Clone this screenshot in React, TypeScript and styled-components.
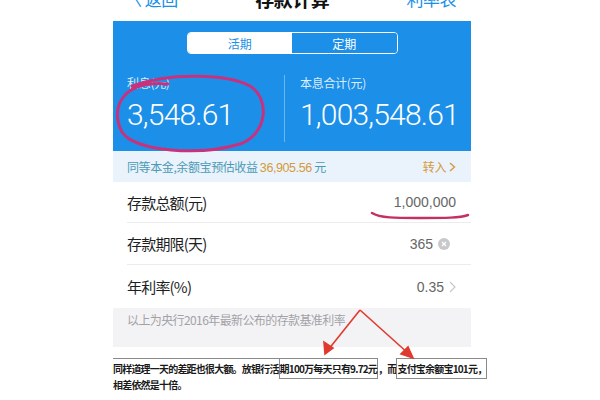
import styled, { createGlobalStyle } from "styled-components";

const GlobalStyle = createGlobalStyle`
  html, body {
    margin: 0;
    padding: 0;
    background: #ffffff;
  }
  body {
    font-family: "Noto Sans CJK SC", "Noto Sans", sans-serif;
  }
`;

const BLUE = "#1c8fe8";

const Page = styled.div`
  position: relative;
  width: 600px;
  height: 400px;
  overflow: hidden;
  background: #ffffff;
`;

const Column = styled.div`
  width: 358px;
  margin-left: 113px;
  display: flex;
  flex-direction: column;
`;

const NavBar = styled.div`
  height: 21px;
  display: flex;
  align-items: flex-start;
  justify-content: space-between;
  padding: 0 15px 0 12px;
  overflow: hidden;
`;

const NavItem = styled.span<{ $strong?: boolean }>`
  margin-top: -11px;
  font-size: ${(p) => (p.$strong ? "19px" : "17px")};
  line-height: 20px;
  font-weight: ${(p) => (p.$strong ? 600 : 400)};
  color: ${(p) => (p.$strong ? "#111" : BLUE)};
  letter-spacing: -0.5px;
`;

const BluePanel = styled.div`
  background: ${BLUE};
  height: 130px;
  display: flex;
  flex-direction: column;
  align-items: center;
  padding-top: 11px;
  box-sizing: border-box;
`;

const Segment = styled.div`
  width: 211px;
  height: 22px;
  display: flex;
  border: 1px solid #ffffff;
  border-radius: 4px;
  overflow: hidden;
  box-sizing: border-box;
`;

const SegmentTab = styled.div<{ $active?: boolean }>`
  flex: 1;
  display: flex;
  align-items: center;
  justify-content: center;
  font-size: 12px;
  background: ${(p) => (p.$active ? "#ffffff" : BLUE)};
  color: ${(p) => (p.$active ? BLUE : "#ffffff")};
`;

const Stats = styled.div`
  margin-top: 21px;
  width: 100%;
  height: 67px;
  display: flex;
`;

const Stat = styled.div<{ $divider?: boolean }>`
  display: flex;
  flex-direction: column;
  box-sizing: border-box;
  padding-left: ${(p) => (p.$divider ? "15px" : "14px")};
  width: ${(p) => (p.$divider ? "187px" : "171px")};
  border-left: ${(p) => (p.$divider ? "1px solid rgba(255,255,255,0.35)" : "none")};
`;

const StatLabel = styled.div`
  font-size: 12px;
  line-height: 16px;
  color: rgba(255, 255, 255, 0.85);
  letter-spacing: -0.3px;
`;

const StatValue = styled.div`
  margin-top: 7px;
  font-family: "Roboto", "Liberation Sans", sans-serif;
  font-weight: 300;
  font-size: 30px;
  line-height: 34px;
  letter-spacing: -0.8px;
  color: #ffffff;
`;

const Promo = styled.div`
  height: 31px;
  background: #eaf3fb;
  display: flex;
  align-items: center;
  justify-content: space-between;
  padding: 0 15px 0 14px;
  font-size: 12px;
  letter-spacing: -0.4px;
`;

const PromoText = styled.span`
  color: #4a9ab6;
`;

const PromoAmount = styled.span`
  color: #d59a3c;
  font-family: "Liberation Sans", sans-serif;
  font-size: 12.5px;
`;

const PromoLink = styled.span`
  color: #d59a3c;
  display: flex;
  align-items: center;
  gap: 3px;
`;

const Row = styled.div<{ $h: number; $last?: boolean }>`
  height: ${(p) => p.$h}px;
  display: flex;
  align-items: center;
  justify-content: space-between;
  margin-left: 14px;
  padding-right: 15px;
  border-bottom: ${(p) => (p.$last ? "none" : "1px solid #ececee")};
  box-sizing: border-box;
`;

const RowLabel = styled.span`
  font-size: 15px;
  color: #1e1e1e;
  letter-spacing: -0.8px;
`;

const RowValue = styled.span`
  display: flex;
  align-items: center;
  gap: 5px;
  font-family: "Liberation Sans", sans-serif;
  font-size: 14px;
  color: #666;
`;

const ClearDot = styled.span`
  width: 12px;
  height: 12px;
  border-radius: 50%;
  background: #c9c9cc;
  display: flex;
  align-items: center;
  justify-content: center;
  margin-right: 6px;
`;

const Hint = styled.div`
  height: 39px;
  background: #f3f3f5;
  padding: 4px 0 0 14px;
  box-sizing: border-box;
  font-size: 12px;
  line-height: 16px;
  color: #a2a2a6;
  letter-spacing: -0.6px;
`;

const Note = styled.div`
  margin-top: 14px;
  width: 385px;
  font-size: 10px;
  line-height: 16px;
  font-weight: 700;
  color: #1a1a1a;
  letter-spacing: -0.8px;
`;

const Lead = styled.span`
  border-top: 1px solid #8a8a8a;
  padding-top: 2px;
`;

const Boxed = styled.span`
  border: 1px solid #8a8a8a;
  padding: 2px 0;
`;

const Overlay = styled.svg`
  position: absolute;
  left: 0;
  top: 0;
  pointer-events: none;
`;

export default function App() {
  return (
    <Page>
      <GlobalStyle />
      <Column>
        <NavBar>
          <NavItem>〈 返回</NavItem>
          <NavItem $strong>存款计算</NavItem>
          <NavItem>利率表</NavItem>
        </NavBar>
        <BluePanel>
          <Segment>
            <SegmentTab $active>活期</SegmentTab>
            <SegmentTab>定期</SegmentTab>
          </Segment>
          <Stats>
            <Stat>
              <StatLabel>利息(元)</StatLabel>
              <StatValue>3,548.61</StatValue>
            </Stat>
            <Stat $divider>
              <StatLabel>本息合计(元)</StatLabel>
              <StatValue>1,003,548.61</StatValue>
            </Stat>
          </Stats>
        </BluePanel>
        <Promo>
          <span>
            <PromoText>同等本金,余额宝预估收益 </PromoText>
            <PromoAmount>36,905.56</PromoAmount>
            <PromoText> 元</PromoText>
          </span>
          <PromoLink>
            转入
            <svg width="7" height="10" viewBox="0 0 7 10">
              <path d="M1 1l4.5 4L1 9" fill="none" stroke="#d59a3c" strokeWidth="1.4" />
            </svg>
          </PromoLink>
        </Promo>
        <Row $h={41}>
          <RowLabel>存款总额(元)</RowLabel>
          <RowValue>1,000,000</RowValue>
        </Row>
        <Row $h={42}>
          <RowLabel>存款期限(天)</RowLabel>
          <RowValue>
            365
            <ClearDot>
              <svg width="6" height="6" viewBox="0 0 6 6">
                <path d="M1 1l4 4M5 1L1 5" stroke="#fff" strokeWidth="1.3" />
              </svg>
            </ClearDot>
          </RowValue>
        </Row>
        <Row $h={43} $last>
          <RowLabel>年利率(%)</RowLabel>
          <RowValue>
            0.35
            <svg width="7" height="12" viewBox="0 0 7 12">
              <path d="M1 1l5 5-5 5" fill="none" stroke="#c8c8cc" strokeWidth="1.2" />
            </svg>
          </RowValue>
        </Row>
        <Hint>以上为央行2016年最新公布的存款基准利率</Hint>
        <Note>
          <Lead>同样道理一天的差距也很大额。放银行活</Lead>
          <Boxed>期100万每天只有9.72元</Boxed>，而<Boxed>支付宝余额宝101元，</Boxed>
          <br />
          相差依然是十倍。
        </Note>
      </Column>
      <Overlay width="600" height="400" viewBox="0 0 600 400">
        <path
          d="M168 84 C 120 80, 110 110, 122 132 C 135 152, 200 156, 240 144 C 268 134, 270 98, 250 86 C 228 74, 170 72, 132 86"
          fill="none"
          stroke="#c8327c"
          strokeWidth="3"
          strokeLinecap="round"
        />
        <path
          d="M372 213 C 380 218, 395 218, 420 218 C 445 218, 460 218, 468 215"
          fill="none"
          stroke="#c4305f"
          strokeWidth="2.5"
          strokeLinecap="round"
        />
        <g stroke="#e03a2e" strokeWidth="1.6" fill="#e03a2e">
          <line x1="360" y1="310" x2="328" y2="350" />
          <polygon points="325,354 324,342 333,348" />
          <line x1="360" y1="310" x2="409" y2="354" />
          <polygon points="413,358 401,354 408,347" />
        </g>
      </Overlay>
    </Page>
  );
}
